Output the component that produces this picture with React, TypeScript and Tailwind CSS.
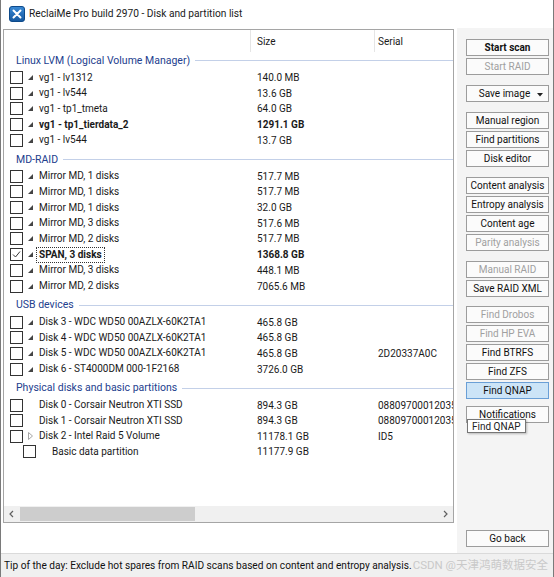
import React from 'react';

type Row = {
  name: string;
  size: string;
  serial?: string;
  bold?: boolean;
  checked?: boolean;
  tri?: 'filled' | 'outline' | 'none';
  indent?: boolean;
  focus?: boolean;
};

const groups: { title: string; rows: Row[] }[] = [
  {
    title: 'Linux LVM (Logical Volume Manager)',
    rows: [
      { name: 'vg1 - lv1312', size: '140.0 MB', tri: 'filled' },
      { name: 'vg1 - lv544', size: '13.6 GB', tri: 'filled' },
      { name: 'vg1 - tp1_tmeta', size: '64.0 GB', tri: 'filled' },
      { name: 'vg1 - tp1_tierdata_2', size: '1291.1 GB', tri: 'filled', bold: true },
      { name: 'vg1 - lv544', size: '13.7 GB', tri: 'filled' },
    ],
  },
  {
    title: 'MD-RAID',
    rows: [
      { name: 'Mirror MD, 1 disks', size: '517.7 MB', tri: 'filled' },
      { name: 'Mirror MD, 1 disks', size: '517.7 MB', tri: 'filled' },
      { name: 'Mirror MD, 1 disks', size: '32.0 GB', tri: 'filled' },
      { name: 'Mirror MD, 3 disks', size: '517.6 MB', tri: 'filled' },
      { name: 'Mirror MD, 2 disks', size: '517.7 MB', tri: 'filled' },
      { name: 'SPAN, 3 disks', size: '1368.8 GB', tri: 'filled', bold: true, checked: true, focus: true },
      { name: 'Mirror MD, 3 disks', size: '448.1 MB', tri: 'filled' },
      { name: 'Mirror MD, 2 disks', size: '7065.6 MB', tri: 'filled' },
    ],
  },
  {
    title: 'USB devices',
    rows: [
      { name: 'Disk 3 - WDC WD50 00AZLX-60K2TA1', size: '465.8 GB', tri: 'filled' },
      { name: 'Disk 4 - WDC WD50 00AZLX-60K2TA1', size: '465.8 GB', tri: 'filled' },
      { name: 'Disk 5 - WDC WD50 00AZLX-60K2TA1', size: '465.8 GB', tri: 'filled', serial: '2D20337A0C' },
      { name: 'Disk 6 - ST4000DM 000-1F2168', size: '3726.0 GB', tri: 'filled' },
    ],
  },
  {
    title: 'Physical disks and basic partitions',
    rows: [
      { name: 'Disk 0 - Corsair Neutron XTI SSD', size: '894.3 GB', tri: 'none', serial: '08809700012035504' },
      { name: 'Disk 1 - Corsair Neutron XTI SSD', size: '894.3 GB', tri: 'none', serial: '08809700012035504' },
      { name: 'Disk 2 - Intel Raid 5 Volume', size: '11178.1 GB', tri: 'outline', serial: 'ID5' },
      { name: 'Basic data partition', size: '11177.9 GB', tri: 'none', indent: true },
    ],
  },
];

function Checkbox({ checked }: { checked?: boolean }) {
  return (
    <span className="w-[13px] h-[13px] border border-[#333333] bg-white flex items-center justify-center shrink-0">
      {checked && (
        <svg width="9" height="9" viewBox="0 0 9 9">
          <path d="M1 4.5 L3.5 7 L8 1.5" fill="none" stroke="#333333" strokeWidth="1" />
        </svg>
      )}
    </span>
  );
}

function Tri({ kind }: { kind?: 'filled' | 'outline' | 'none' }) {
  if (kind === 'filled') {
    return (
      <svg width="5" height="5" viewBox="0 0 5 5" className="shrink-0">
        <polygon points="5,0 5,5 0,5" fill="#444444" />
      </svg>
    );
  }
  if (kind === 'outline') {
    return (
      <svg width="5" height="8" viewBox="0 0 5 8" className="shrink-0">
        <polygon points="0.5,0.5 4.5,4 0.5,7.5" fill="none" stroke="#a6a6a6" strokeWidth="1" />
      </svg>
    );
  }
  return <span className="w-[5px] shrink-0" />;
}

function ListRow({ r }: { r: Row }) {
  return (
    <div className="grid grid-cols-[247px_124px_1fr] h-[15.7px] items-center text-[#1a1a1a]">
      <div className={`flex items-center min-w-0 ${r.indent ? 'pl-[19px]' : 'pl-[6px]'}`}>
        <Checkbox checked={r.checked} />
        {r.indent ? (
          <span className="ml-[16px] whitespace-nowrap">{r.name}</span>
        ) : (
          <>
            <span className="ml-[5px] flex items-center">
              <Tri kind={r.tri} />
            </span>
            <span
              className={`ml-[3px] px-[2px] whitespace-nowrap leading-[14px] ${r.bold ? 'font-bold' : ''} ${
                r.focus ? 'border border-dotted border-[#333333]' : 'border border-transparent'
              }`}
            >
              {r.name}
            </span>
          </>
        )}
      </div>
      <div className={`pl-[6px] whitespace-nowrap ${r.bold ? 'font-bold' : ''}`}>{r.size}</div>
      <div className="pl-[3px] whitespace-nowrap overflow-hidden">{r.serial ?? ''}</div>
    </div>
  );
}

function GroupHeader({ title, first }: { title: string; first?: boolean }) {
  return (
    <div className={`flex items-center h-[17.5px] pl-[12px] ${first ? '' : 'mt-[2.8px]'}`}>
      <span className="text-[#23408e] whitespace-nowrap text-[10.5px]">{title}</span>
      <span className="flex-1 h-px bg-[#c3d0e8] ml-[5px]" />
    </div>
  );
}

type Btn = { label: string; disabled?: boolean; bold?: boolean; dropdown?: boolean; hot?: boolean; gap?: string };

const buttons: Btn[] = [
  { label: 'Start scan', bold: true },
  { label: 'Start RAID', disabled: true },
  { label: 'Save image', dropdown: true, gap: 'mt-[10px]' },
  { label: 'Manual region', gap: 'mt-[10px]' },
  { label: 'Find partitions' },
  { label: 'Disk editor' },
  { label: 'Content analysis', gap: 'mt-[10px]' },
  { label: 'Entropy analysis' },
  { label: 'Content age' },
  { label: 'Parity analysis', disabled: true },
  { label: 'Manual RAID', disabled: true, gap: 'mt-[10px]' },
  { label: 'Save RAID XML' },
  { label: 'Find Drobos', disabled: true, gap: 'mt-[9px]' },
  { label: 'Find HP EVA', disabled: true },
  { label: 'Find BTRFS' },
  { label: 'Find ZFS' },
  { label: 'Find QNAP', hot: true },
  { label: 'Notifications', gap: 'mt-[7px]' },
];

function Button({ b }: { b: Btn }) {
  return (
    <div
      className={`relative h-[17px] w-[83px] flex items-center justify-center border ${b.gap ?? 'mt-[2px]'} ${
        b.hot ? 'bg-[#cce4f7] border-[#6a9fd6]' : 'bg-[#fbfbfb] border-[#9c9c9c]'
      } ${b.disabled ? 'text-[#a0a0a0]' : 'text-[#111111]'} ${b.bold ? 'font-bold' : ''}`}
    >
      <span className={`whitespace-nowrap ${b.dropdown ? '-ml-[6px]' : ''}`}>{b.label}</span>
      {b.dropdown && (
        <svg width="6" height="4" viewBox="0 0 6 4" className="absolute right-[5px] top-[7px]">
          <polygon points="0,0 6,0 3,3.5" fill="#222222" />
        </svg>
      )}
    </div>
  );
}

function Logo() {
  return (
    <svg width="16" height="16" viewBox="0 0 16 16" className="shrink-0">
      <defs>
        <linearGradient id="lg" x1="0" y1="0" x2="0" y2="1">
          <stop offset="0" stopColor="#3a8ad6" />
          <stop offset="1" stopColor="#15579e" />
        </linearGradient>
      </defs>
      <rect x="0.5" y="0.5" width="15" height="15" rx="2.5" fill="url(#lg)" stroke="#0e4a8a" strokeWidth="1" />
      <path d="M4.5 4.5 L11.5 11.5 M11.5 4.5 L4.5 11.5" stroke="#ffffff" strokeWidth="2" strokeLinecap="round" />
      <circle cx="8" cy="8" r="1.6" fill="#ffffff" />
    </svg>
  );
}

export default function App() {
  return (
    <div className="w-[554px] h-[577px] bg-white flex flex-col overflow-hidden font-['Roboto','Noto_Sans','Noto_Sans_CJK_SC',sans-serif] text-[10px] text-[#111111] border-x border-[#7a7a7a]">
      {/* Title bar */}
      <div className="h-[28px] flex items-center pl-[8px] shrink-0">
        <Logo />
        <span className="ml-[4px] text-[10.2px] text-[#1a1a1a] whitespace-nowrap">
          ReclaiMe Pro build 2970 - Disk and partition list
        </span>
      </div>

      {/* Body */}
      <div className="flex h-[525px] shrink-0">
        {/* List area */}
        <div className="w-[456px] pl-[2px] pt-[1px]">
          <div className="w-[451px] h-[494px] border border-[#a5a5a5] flex flex-col bg-white">
            {/* Header */}
            <div className="grid grid-cols-[247px_124px_1fr] h-[22px] shrink-0 text-[#1a1a1a]">
              <div className="border-r border-[#e5e5e5]" />
              <div className="border-r border-[#e5e5e5] pl-[6px] flex items-center">Size</div>
              <div className="pl-[3px] flex items-center">Serial</div>
            </div>
            {/* Rows */}
            <div className="flex-1 overflow-hidden">
              {groups.map((g, gi) => (
                <div key={gi}>
                  <GroupHeader title={g.title} first={gi === 0} />
                  {g.rows.map((r, ri) => (
                    <ListRow key={ri} r={r} />
                  ))}
                </div>
              ))}
            </div>
            {/* Horizontal scrollbar */}
            <div className="h-[16px] shrink-0 bg-[#f0f0f0] flex items-center relative">
              <svg width="16" height="16" viewBox="0 0 16 16" className="shrink-0">
                <path d="M9 5 L6 8 L9 11" fill="none" stroke="#606060" strokeWidth="1.2" />
              </svg>
              <div className="h-[14px] w-[175px] bg-[#cdcdcd]" />
              <div className="flex-1" />
              <svg width="16" height="16" viewBox="0 0 16 16" className="shrink-0">
                <path d="M7 5 L10 8 L7 11" fill="none" stroke="#606060" strokeWidth="1.2" />
              </svg>
            </div>
          </div>
        </div>

        {/* Button panel */}
        <div className="flex-1 bg-[#f4f4f4] flex flex-col items-start pl-[9px] pt-[9px] relative">
          {buttons.map((b, i) => (
            <Button key={i} b={b} />
          ))}
          <div className="flex-1" />
          <div className="h-[17px] w-[83px] flex items-center justify-center border bg-[#fbfbfb] border-[#9c9c9c] text-[#111111] mb-[6px]">
            Go back
          </div>
          {/* Tooltip */}
          <div className="absolute left-[10px] top-[391px] h-[14px] px-[4px] flex items-center bg-white border border-[#767676] text-[#222222] shadow-[1px_1px_2px_rgba(0,0,0,0.25)] whitespace-nowrap">
            Find QNAP
          </div>
        </div>
      </div>

      {/* Status bar */}
      <div className="flex-1 bg-[#f0f0f0] border-t border-[#dadada] flex items-center pl-[3px] whitespace-nowrap overflow-hidden">
        <span className="text-[#111111] text-[10.15px]">
          Tip of the day: Exclude hot spares from RAID scans based on content and entropy analysis.
        </span>
        <span className="text-[#c9c9c9] ml-[1px] text-[11.5px]">CSDN @天津鸿萌数据安全</span>
      </div>
    </div>
  );
}
